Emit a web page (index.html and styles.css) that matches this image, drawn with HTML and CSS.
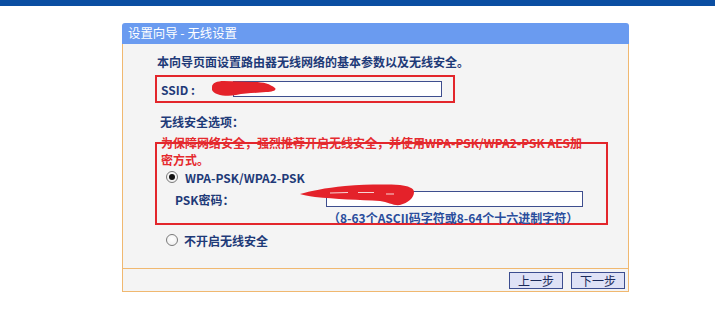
FILE: index.html
```html
<!DOCTYPE html>
<html lang="zh-CN">
<head>
<meta charset="utf-8">
<title>设置向导 - 无线设置</title>
<link rel="stylesheet" href="styles.css">
</head>
<body>
<div class="topbar"></div>
<div class="panel">
  <div class="panel-head">设置向导 - 无线设置</div>
  <div class="panel-body">
    <p class="intro">本向导页面设置路由器无线网络的基本参数以及无线安全。</p>
    <div class="ssid-box">
      <span class="ssid-label">SSID :</span>
      <span class="field-wrap">
        <span class="field ssid-field"></span>
        <svg class="scribble ssid-scribble" width="66" height="17" viewBox="0 0 66 17"><path d="M0 7 C0 3 5 1 12 1 C22 1 32 2 42 2 C52 2 58 4 63 8 C65 10 61 12 54 12 C44 13 34 13 24 15 C14 17 2 15 0 10 Z" fill="#e4222a"/></svg>
      </span>
    </div>
    <p class="section-title">无线安全选项：</p>
    <div class="sec-box">
      <p class="warning">为保障网络安全，强烈推荐开启无线安全，并使用WPA-PSK/WPA2-PSK AES加<br>密方式。</p>
      <div class="radio-row checked-row">
        <span class="radio checked"></span>
        <span class="radio-text">WPA-PSK/WPA2-PSK</span>
      </div>
      <div class="psk-row">
        <span class="psk-label">PSK密码：</span>
        <span class="field-wrap">
          <span class="field psk-field"></span>
          <svg class="scribble psk-scribble" width="116" height="23" viewBox="0 0 116 23"><path d="M0 10 C10 7 25 4 45 2 C65 0.5 85 0.3 100 1 C108 2 114 4 114 8 C114 14 108 19 100 21 C94 22 88 18 80 17 C60 16 35 15 15 13 C8 12 3 11 0 10 Z" fill="#e4222a"/><path d="M30 9 L48 8.5 M58 8.5 L74 8.5 M86 10 L94 10" stroke="#f7d4d4" stroke-width="1.2" fill="none"/></svg>
        </span>
      </div>
      <p class="hint">（8-63个ASCII码字符或8-64个十六进制字符）</p>
    </div>
    <div class="radio-row off-row">
      <span class="radio"></span>
      <span class="radio-text">不开启无线安全</span>
    </div>
  </div>
  <div class="panel-foot">
    <button class="btn">上一步</button>
    <button class="btn">下一步</button>
  </div>
</div>
</body>
</html>
```

FILE: styles.css
```css
* { box-sizing: border-box; }
html, body { margin: 0; padding: 0; background: #ffffff; }
body {
  font-family: "Noto Sans CJK SC", "Noto Sans", "DejaVu Sans", sans-serif;
  font-size: 12px;
  color: #1e3a78;
}
p { margin: 0; }

.topbar {
  height: 6px;
  background: #0b4ea2;
}

.panel {
  width: 507px;
  margin: 17px 0 0 122px;
}

.panel-head {
  height: 21px;
  line-height: 21px;
  padding-left: 6px;
  background: #6a9bf0;
  color: #ffffff;
  font-size: 12.4px;
  border-radius: 3px 3px 0 0;
}

.panel-body {
  background: #f4f4f4;
  border-left: 1px solid #f0b870;
  border-right: 1px solid #f0b870;
  padding: 10px 0 0 32px;
  height: 224px;
}

.intro {
  line-height: 16px;
  margin-left: 2px;
  font-weight: 600;
}

.ssid-box {
  margin-top: 5px;
  width: 300px;
  height: 28px;
  border: 2px solid #e3262b;
  display: flex;
  align-items: center;
  padding-left: 4px;
}
.ssid-label {
  width: 72px;
  font-weight: 600;
}

.field-wrap {
  position: relative;
  display: block;
}
.field {
  display: block;
  background: #ffffff;
  border: 1px solid #3e4e8e;
}
.ssid-field { width: 209px; height: 16px; }
.psk-field { width: 257px; height: 16px; }

.scribble {
  position: absolute;
  display: block;
}
.ssid-scribble { left: -21px; top: -1px; }
.psk-scribble { left: -26px; top: -7px; }

.section-title {
  margin: 11px 0 0 5px;
  line-height: 16px;
  font-weight: 600;
}

.sec-box {
  margin-top: 12px;
  width: 453px;
  border: 2px solid #e3262b;
}

.warning {
  margin: -10px 0 0 4px;
  line-height: 17px;
  color: #e52a2e;
  font-weight: 600;
  white-space: nowrap;
}

.radio-row {
  display: flex;
  align-items: center;
  height: 16px;
}
.checked-row { margin: 1px 0 0 9px; }
.off-row { margin: 7px 0 0 11px; }

.radio {
  width: 12px;
  height: 12px;
  border-radius: 50%;
  border: 1px solid #7a7a7a;
  background: radial-gradient(circle at 50% 40%, #ffffff 0%, #ececec 100%);
  display: flex;
  align-items: center;
  justify-content: center;
  flex: none;
}
.radio.checked::after {
  content: "";
  width: 6px;
  height: 6px;
  border-radius: 50%;
  background: #111111;
}
.checked-row .radio-text { margin-left: 7px; }
.off-row .radio-text { margin-left: 6px; }
.radio-text { font-weight: 600; }

.psk-row {
  display: flex;
  align-items: center;
  height: 18px;
  margin: 5px 0 0 18px;
}
.psk-label {
  width: 151px;
  font-weight: 600;
}

.hint {
  margin: 5px 0 0 171px;
  line-height: 10px;
  height: 10px;
  color: #2a4d9c;
  font-weight: 600;
}

.panel-foot {
  height: 24px;
  background: #f4f4f4;
  border: 1px solid #f0b870;
  display: flex;
  justify-content: flex-end;
  align-items: center;
  gap: 8px;
  padding-right: 3px;
}

.btn {
  width: 54px;
  height: 17px;
  padding: 0;
  margin: 0;
  background: #dfe2f6;
  border: 1px solid #3c4d8f;
  color: #1b2a5a;
  font-family: "Noto Sans CJK SC", sans-serif;
  font-size: 12px;
  line-height: 15px;
}
```
